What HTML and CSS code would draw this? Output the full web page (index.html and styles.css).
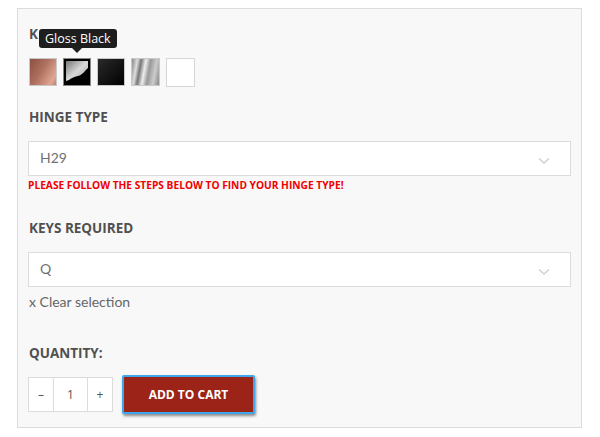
FILE: index.html
```html
<!DOCTYPE html>
<html>
<head>
<meta charset="utf-8">
<link rel="stylesheet" href="styles.css">
</head>
<body>
<div class="panel">
  <div class="field field-finish">
    <div class="label-wrap">
      <span class="label">K</span>
      <div class="tooltip">Gloss Black</div>
    </div>
    <div class="swatches">
      <span class="swatch sw-copper"></span>
      <span class="swatch sw-gloss selected">
        <svg width="26" height="26" viewBox="0 0 26 26"><rect width="26" height="26" fill="#000"/><path d="M2 2 H24 V9 C21 11 19 16 14 17 C10 18 7 19 5 21 L2 22 Z" fill="url(#gl)"/><defs><linearGradient id="gl" x1="0" y1="0" x2="1" y2="1"><stop offset="0" stop-color="#777"/><stop offset="0.5" stop-color="#d8d8d8"/><stop offset="1" stop-color="#aaa"/></linearGradient></defs></svg>
      </span>
      <span class="swatch sw-black"></span>
      <span class="swatch sw-chrome"></span>
      <span class="swatch sw-white"></span>
    </div>
  </div>

  <div class="field field-hinge">
    <div class="label">HINGE TYPE</div>
    <div class="select">
      <span class="select-value">H29</span>
      <svg class="chev" width="12" height="8" viewBox="0 0 12 8"><path d="M1 1.5 L6 6 L11 1.5" fill="none" stroke="#d0d0d0" stroke-width="1.6"/></svg>
    </div>
    <div class="warn">PLEASE FOLLOW THE STEPS BELOW TO FIND YOUR HINGE TYPE!</div>
  </div>

  <div class="field field-keys">
    <div class="label">KEYS REQUIRED</div>
    <div class="select">
      <span class="select-value">Q</span>
      <svg class="chev" width="12" height="8" viewBox="0 0 12 8"><path d="M1 1.5 L6 6 L11 1.5" fill="none" stroke="#d0d0d0" stroke-width="1.6"/></svg>
    </div>
    <div class="clear">x Clear selection</div>
  </div>

  <div class="field field-qty">
    <div class="label">QUANTITY:</div>
    <div class="cart-row">
      <div class="qty">
        <span class="qty-btn">–</span>
        <span class="qty-val">1</span>
        <span class="qty-btn">+</span>
      </div>
      <button class="add">ADD TO CART</button>
    </div>
  </div>
</div>
</body>
</html>
```

FILE: styles.css
```css
html, body {
  margin: 0;
  padding: 0;
  background: #fff;
}
body {
  font-family: "Open Sans", "Liberation Sans", sans-serif;
}
.panel {
  margin: 8px 0 0 17px;
  width: 543px;
  border: 1px solid #dcdcdc;
  background: #f8f8f8;
  padding: 15px 10px 0 10px;
  box-sizing: content-box;
  height: 403px;
}
.label {
  font-family: "Open Sans", sans-serif;
  font-weight: 700;
  font-size: 13.5px;
  line-height: 20px;
  color: #505050;
  display: block;
  padding-left: 1px;
}
.label-wrap {
  position: relative;
  height: 20px;
}
.tooltip {
  position: absolute;
  left: 11px;
  top: 5px;
  height: 19px;
  padding: 0 6px;
  background: #1e1e1e;
  color: #fff;
  border-radius: 3px;
  font-family: "Open Sans", sans-serif;
  font-size: 12.5px;
  line-height: 19px;
  white-space: nowrap;
}
.tooltip::after {
  content: "";
  position: absolute;
  left: 33px;
  top: 19px;
  border-left: 5px solid transparent;
  border-right: 5px solid transparent;
  border-top: 5px solid #1e1e1e;
}
.swatches {
  display: flex;
  gap: 6px;
  margin-top: 14px;
  padding-left: 1px;
}
.swatch {
  width: 26px;
  height: 26px;
  border: 1px solid #c8c8c8;
  display: block;
}
.swatch svg { display: block; }
.swatch.selected { border-color: #888; }
.sw-copper {
  background: linear-gradient(120deg, #8a5040 0%, #b07060 45%, #e0a890 85%, #c08070 100%);
}
.sw-black {
  background: linear-gradient(135deg, #2a2a2a 0%, #111 60%, #000 100%);
}
.sw-chrome {
  width: 27px;
  background: linear-gradient(100deg, #888 0%, #ddd 18%, #777 30%, #eee 45%, #999 60%, #ccc 80%, #888 100%);
}
.sw-white {
  width: 27px;
  height: 27px;
  background: #fff;
  border-color: #d6d6d6;
}
.field-hinge { margin-top: 20px; }
.field-keys { margin-top: 26px; }
.field-qty { margin-top: 32px; }
.select {
  margin-top: 14px;
  height: 33px;
  border: 1px solid #dcdcdc;
  background: #fff;
  display: flex;
  align-items: center;
  justify-content: space-between;
  padding: 0 20px 0 11px;
}
.select-value {
  font-family: Lato, sans-serif;
  font-size: 14px;
  color: #707070;
  margin-top: -3px;
}
.chev { margin-top: 4px; }
.warn {
  margin-top: 2px;
  font-family: "Open Sans", sans-serif;
  font-weight: 700;
  font-size: 10.2px;
  line-height: 14px;
  color: #f00000;
}
.clear {
  margin-top: 6px;
  font-family: Lato, sans-serif;
  font-size: 14px;
  line-height: 18px;
  color: #666;
  padding-left: 1px;
}
.cart-row {
  display: flex;
  align-items: center;
  gap: 9px;
  margin-top: 12px;
}
.qty {
  display: flex;
  height: 35px;
  border: 1px solid #dcdcdc;
  background: #fff;
  box-sizing: border-box;
}
.qty-btn, .qty-val {
  display: flex;
  align-items: center;
  justify-content: center;
  font-family: "Open Sans", sans-serif;
  font-size: 12px;
  color: #555;
}
.qty-btn { width: 24px; }
.qty-val {
  width: 33px;
  border-left: 1px solid #dcdcdc;
  border-right: 1px solid #dcdcdc;
}
.add {
  width: 133px;
  height: 39px;
  background: #9c2317;
  border: 2px solid #3ea6ea;
  border-radius: 2px;
  color: #fff;
  font-family: "Open Sans", sans-serif;
  font-weight: 700;
  font-size: 12px;
  box-shadow: 1px 2px 3px rgba(0,0,0,0.45);
  padding: 0;
}
```
